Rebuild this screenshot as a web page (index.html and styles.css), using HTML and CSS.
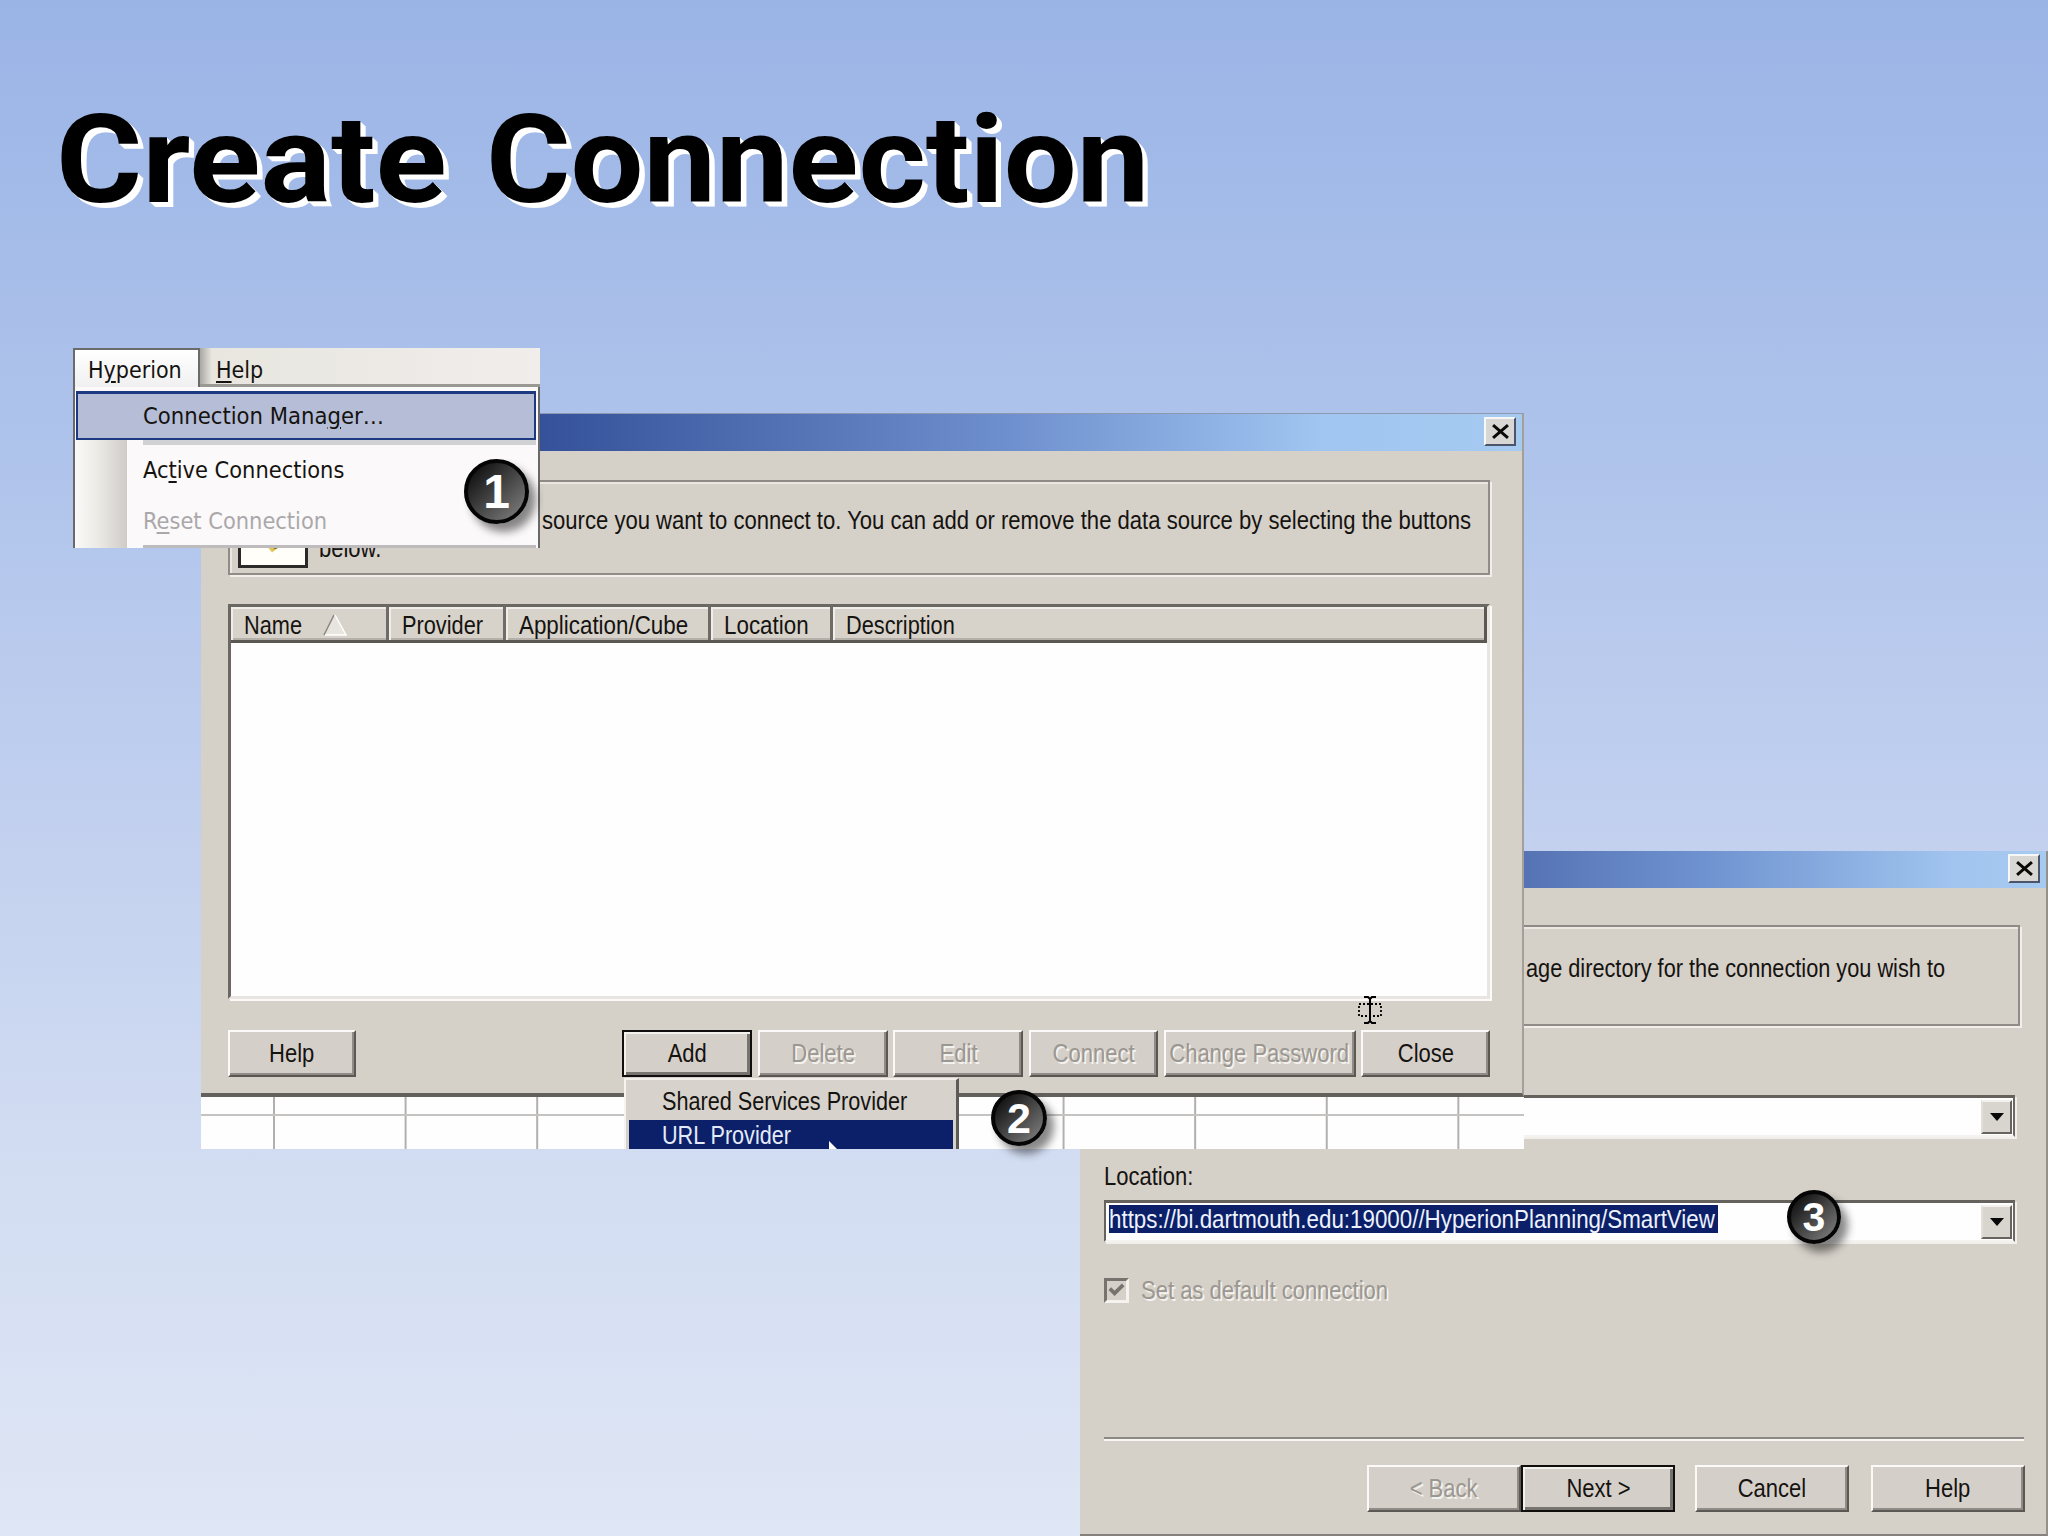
FILE: index.html
```html
<!DOCTYPE html>
<html lang="en">
<head>
<meta charset="utf-8">
<title>Create Connection</title>
<link rel="stylesheet" href="styles.css">
</head>
<body>
<main class="slide">
  <h1 class="title"><span class="word-a">Create</span><span class="word-b">Connection</span></h1>

  <section class="wizard">
    <header class="titlebar wizard-titlebar">
      <button class="close" aria-label="Close"><svg viewBox="0 0 16 14"><path d="M1 1 L15 13 M15 1 L1 13"/></svg></button>
    </header>
    <div class="wizard-body">
      <div class="group wizard-group"><span class="t t-age">age directory for the connection you wish to</span></div>
      <div class="combo combo-first"><span class="drop"><i></i></span></div>
      <div class="label"><span class="t t-location">Location:</span></div>
      <div class="combo combo-url"><span class="selection"><span class="t t-url">https://bi.dartmouth.edu:19000//HyperionPlanning/SmartView</span></span><span class="drop"><i></i></span></div>
      <div class="check-row">
        <span class="checkbox"><svg viewBox="0 0 20 20"><path d="M3 8 L8 13 L17 4"/></svg></span>
        <span class="t disabled t-default">Set as default connection</span>
      </div>
      <div class="rule"></div>
      <footer class="wizard-buttons">
        <button class="btn"><span class="t disabled t-back">&lt; Back</span></button>
        <button class="btn primary"><span class="t t-next">Next &gt;</span></button>
        <button class="btn gap-a"><span class="t">Cancel</span></button>
        <button class="btn gap-b"><span class="t">Help</span></button>
      </footer>
    </div>
  </section>

  <section class="manager">
    <div class="dialog">
      <header class="titlebar">
        <button class="close" aria-label="Close"><svg viewBox="0 0 16 14"><path d="M1 1 L15 13 M15 1 L1 13"/></svg></button>
      </header>
      <div class="dialog-body">
        <div class="group intro">
          <span class="intro-icon"><svg viewBox="0 0 66 30"><path d="M24 7 L32 17 L45 7 Z" fill="#e3c65a"/><path d="M33 14 L42 7 L39 12 Z" fill="#554a20"/></svg></span>
          <p class="intro-text"><span class="t t-source">source you want to connect to. You can add or remove the data source by selecting the buttons</span><span class="t t-below">below.</span></p>
        </div>
        <div class="list">
          <div class="columns">
            <div class="col"><span class="t">Name</span><svg class="sort" viewBox="0 0 24 22"><path d="M11 1 L23 21 L1 21 Z" fill="#e8e5df"/><path d="M1 21 L11 1" stroke="#8b8882" stroke-width="1.6"/><path d="M12 1 L23 21 L2 21" fill="none" stroke="#fff" stroke-width="1.5"/></svg></div>
            <div class="col"><span class="t">Provider</span></div>
            <div class="col"><span class="t t-app">Application/Cube</span></div>
            <div class="col"><span class="t t-app">Location</span></div>
            <div class="col"><span class="t">Description</span></div>
          </div>
        </div>
        <footer class="manager-buttons">
          <button class="btn"><span class="t">Help</span></button>
          <span></span>
          <button class="btn primary"><span class="t">Add</span></button>
          <button class="btn"><span class="t disabled">Delete</span></button>
          <button class="btn"><span class="t disabled">Edit</span></button>
          <button class="btn"><span class="t disabled">Connect</span></button>
          <button class="btn"><span class="t disabled">Change Password</span></button>
          <button class="btn"><span class="t">Close</span></button>
        </footer>
      </div>
    </div>
    <div class="sheet"></div>
    <div class="popup">
      <div class="popup-item"><span class="t">Shared Services Provider</span></div>
      <div class="popup-item active"><span class="t">URL Provider</span></div>
      <svg class="arrow" viewBox="0 0 12 8"><path d="M2 0 L10 8 L2 8 Z" fill="#fff"/></svg>
    </div>
    <svg class="ibeam" viewBox="0 0 24 28"><path d="M6 1 H10 L12 3 L14 1 H18 M12 3 V25 M6 27 H10 L12 25 L14 27 H18" fill="none" stroke="#000" stroke-width="2"/><path d="M1 8 H23 V20 H1 Z" fill="none" stroke="#000" stroke-width="1.8" stroke-dasharray="2 2"/></svg>
    <span class="badge badge-two">2</span>
  </section>

  <section class="menu">
    <nav class="menubar">
      <span class="tab"><span class="m m-hyp">H<u>y</u>perion</span></span>
      <span class="tab-help"><span class="m m-help"><u>H</u>elp</span></span>
    </nav>
    <div class="menu-list">
      <div class="menu-item selected"><span class="m m-mgr">Connection Mana<u>g</u>er…</span></div>
      <div class="menu-rest">
        <div class="gutter"></div>
        <div class="menu-items">
          <div class="menu-item active-row"><span class="m m-act">Ac<u>t</u>ive Connections</span></div>
          <div class="menu-item reset-row"><span class="m m-reset">R<u>e</u>set Connection</span></div>
        </div>
      </div>
    </div>
    <span class="badge badge-one">1</span>
  </section>

  <span class="badge badge-three">3</span>
</main>
</body>
</html>
```
FILE: styles.css
```css
* { box-sizing: border-box; }
html, body { margin: 0; }
.slide {
  position: relative;
  width: 2048px;
  height: 1536px;
  overflow: hidden;
  background: linear-gradient(#9ab4e6 0%, #aec3eb 28%, #c3d1ef 55%, #d2ddf2 76%, #dfe6f5 100%);
  font-family: "Liberation Sans", Arial, sans-serif;
  font-size: 25px;
  color: #151310;
}
.title {
  display: flex;
  margin: 0;
  padding: 86px 0 0 56px;
  font: 700 122px/150px Roboto, "Open Sans", sans-serif;
  color: #000;
  text-shadow: 1px 1px #fff, 2px 2px #fff, 3px 3px #fff, 4px 4px #fff, 5px 5px #fff;
}
.word-a, .word-b { transform-origin: left; }
.word-a { width: 430px; transform: scaleX(1.08); }
.word-b { transform: scaleX(1.06); }

/* Condensed system lettering */
.t { display: inline-block; white-space: nowrap; transform: scaleX(.88); line-height: 30px; }
.disabled { color: #9b9791; text-shadow: 2px 2px #f4f2ee; }

/* Shared window parts */
button { padding: 0; font: inherit; color: inherit; }
.titlebar { display: flex; justify-content: flex-end; align-items: flex-start; height: 37px; padding: 3px 6px 0 0; }
.close {
  display: grid; place-items: center; width: 32px; height: 29px;
  background: #d9d7d3; border: 2px solid; border-color: #f7f7f7 #4b5468 #4b5468 #f7f7f7;
}
.close svg { width: 17px; height: 15px; stroke: #0c0a08; stroke-width: 2.8; }
.group { border: 2px solid #918d86; border-top-color: #8f8b84; box-shadow: 2px 2px #f1efec, inset 2px 2px #ebe8e3; }
.btn {
  display: grid; place-content: center; height: 47px; padding-bottom: 2px; background: #d5cfc9;
  border: 2px solid; border-color: #fbfaf8 #5b5752 #5b5752 #fbfaf8;
  box-shadow: inset -2px -2px #8f8b86;
}
.primary { border-color: #100f0e; box-shadow: inset 2px 2px #f3f1ee, inset -3px -3px #77736e; }

/* Connection manager */
.manager { position: absolute; left: 201px; top: 413px; width: 1323px; height: 736px; }
.dialog { height: 684px; background: #d5d0c8; border-right: 2px solid #a3a09b; border-bottom: 4px solid #64615d; border-top: 1px solid #8e98ae; }
.dialog .titlebar { background: linear-gradient(90deg, #0a246a, #35529a 26%, #7091cf 62%, #a0c6f1 85%, #a6caf0); }
.dialog-body { padding: 29px 32px 0 27px; }
.intro { display: flex; height: 95px; padding: 8px 0 0 8px; }
.intro-icon { flex: none; width: 70px; height: 78px; padding-top: 46px; background: #fffef8; border: 3px solid #2c2a28; border-top: 0; }
.intro-icon svg { display: block; }
.intro-text { display: flex; flex-direction: column; align-items: flex-start; margin: 16px 0 0 11px; }
.intro-text .t { line-height: 28px; transform-origin: left; }
.intro-text .t-source { margin-left: 223px; transform: scaleX(.883); }
.list { height: 395px; margin-top: 29px; background: #fefefe; border: 3px solid; border-color: #6b6863 #e9e6e1 #e9e6e1 #6b6863; box-shadow: 2px 2px #fbfaf9; }
.columns { display: grid; grid-template-columns: 158px 117px 205px 122px 1fr; height: 36px; border-right: 3px solid #5b5854; border-bottom: 3px solid #5b5854; }
.col { display: flex; align-items: center; padding: 2px 0 0 13px; border-right: 3px solid #6f6c67; background: #d7d2ca; box-shadow: inset 2px 2px #f0eeea, inset 0 -2px #b5b0a9; }
.col:last-child { border-right: 0; }
.col .t { transform-origin: left; transform: scaleX(.87); }
.col .t-app { transform: scaleX(.895); }
.sort { width: 24px; height: 22px; margin-left: 12px; }
.manager-buttons { display: grid; grid-template-columns: 128px 255px 130px 130px 130px 129px 192px 129px; column-gap: 5.6px; width: 1264px; margin-top: 31px; }
.sheet {
  height: 52px;
  background:
    linear-gradient(#c5c3c2, #c5c3c2) 0 17px / 100% 2px no-repeat,
    linear-gradient(90deg, #b2b0af 2px, transparent 2px) 72px 0 / 131.6px 100%,
    #fefefe;
}
.popup { position: absolute; left: 423px; top: 665px; width: 335px; height: 71px; padding: 6px 3px 0; background: #d8d2cc; border-left: 2px solid #f5f3f0; border-top: 2px solid #f2efeb; border-right: 3px solid #5d5a57; overflow: hidden; }
.popup-item { height: 34px; padding: 0 0 0 33px; }
.popup-item .t { transform-origin: left; transform: scaleX(.865); }
.active { height: 32px; color: #e4eaf8; background: #0b2069; }
.arrow { position: absolute; left: 201px; top: 61px; width: 12px; height: 8px; }
.ibeam { position: absolute; left: 1157px; top: 583px; width: 24px; height: 28px; }

/* Provider wizard */
.wizard { position: absolute; left: 1080px; top: 851px; width: 968px; height: 685px; background: #d5d0c8; border-right: 2px solid #94918c; border-bottom: 2px solid #85817c; }
.wizard-titlebar { padding-right: 6px; background: linear-gradient(90deg, #0a246a, #5673b4 46%, #6f93d0 65%, #a0c4ee 90%, #a6caf0); }
.wizard-body { padding: 37px 21px 0 24px; }
.wizard-group { width: 916px; height: 101px; padding: 26px 0 0 420px; }
.t-age { transform-origin: left; transform: scaleX(.869); }
.combo { display: flex; justify-content: space-between; width: 911px; height: 42px; padding: 2px 1px; background: #fefefe; border: 2px solid; border-color: #65625d #6c6964 #f5f3f0 #65625d; border-top-width: 3px; box-shadow: 2px 2px #f1efec; }
.combo-first { margin-top: 69px; }
.drop { display: grid; place-items: center; width: 31px; height: 34px; margin-left: auto; background: #d8d5cf; border: 2px solid; border-color: #f3f1ed #67645f #67645f #e2dfda; }
.drop i { border: 7px solid transparent; border-top: 8px solid #080808; border-bottom: 0; }
.label { height: 63px; padding-top: 24px; }
.label .t, .check-row .t { transform-origin: left; }
.selection { width: 609px; height: 28px; margin: 0 0 0 2px; background: #0b2069; color: #edf2fb; overflow: hidden; }
.selection .t { line-height: 28px; transform-origin: left; transform: scaleX(.894); }
.check-row { display: flex; align-items: center; gap: 12px; height: 30px; margin-top: 33px; }
.checkbox { width: 25px; height: 25px; border: 3px solid; border-color: #77736e #f5f3f0 #f5f3f0 #77736e; }
.checkbox svg { display: block; width: 19px; height: 19px; fill: none; stroke: #77736e; stroke-width: 4; }
.rule { width: 920px; height: 4px; margin-top: 132px; background: linear-gradient(#8c8883 50%, #f8f6f3 50%); }
.wizard-buttons { display: flex; justify-content: flex-end; margin-top: 24px; }
.wizard-buttons .btn { width: 154px; }
.wizard-buttons .gap-a { margin-left: 20px; }
.wizard-buttons .gap-b { margin-left: 22px; }

/* Application menu */
.menu { position: absolute; left: 73px; top: 348px; width: 467px; height: 200px; font-family: "DejaVu Sans Condensed", "DejaVu Sans", sans-serif; font-stretch: condensed; font-size: 23px; }
.m { display: inline-block; white-space: nowrap; transform-origin: left; line-height: 30px; }
.m u { text-decoration-thickness: 2px; text-underline-offset: 3px; }
.m-mgr { transform: scaleX(1.025); }
.m-act, .m-reset { transform: scaleX(1.015); }
.menubar { display: flex; height: 39px; background: linear-gradient(90deg, #e5e3da, #f0edeb); }
.tab { width: 127px; padding: 5px 0 0 13px; background: linear-gradient(#fff, #f1f0f0); border: 2px solid #6b6b6b; border-bottom: 0; }
.tab-help { flex: 1; padding: 7px 0 0 16px; background: linear-gradient(90deg, #aaa8a5, transparent 12px); border-bottom: 3px solid #9a9893; }
.menu-list { height: 161px; padding: 4px 2px 0 1px; background: #fcf9fa; border-left: 2px solid #69696c; border-right: 2px solid #69696c; }
.menu-item.selected { height: 49px; padding: 7px 0 0 65px; background: #b5bdd7; border: 2px solid #1c3982; border-top-width: 3px; }
.menu-rest { display: flex; height: 108px; }
.gutter { width: 51px; background: linear-gradient(90deg, #faf9f8, #e9e7e2 50%, #cfcbc6); }
.menu-items { flex: 1; margin-left: 16px; border-top: 5px solid #cfd1d2; border-bottom: 3px solid #bdbbbb; }
.active-row { padding-top: 10px; }
.reset-row { padding-top: 21px; color: #aaa8aa; }

/* Step markers */
.badge {
  position: absolute; display: grid; place-items: center; border: 4px solid #050505; border-radius: 50%;
  background: linear-gradient(135deg, #171717 15%, #777 90%); box-shadow: 7px 8px 9px #0007;
  color: #fff; font-family: "Liberation Sans", Arial, sans-serif; font-weight: 700;
}
.badge-one { left: 391px; top: 111px; width: 65px; height: 65px; font-size: 48px; }
.badge-two { left: 790px; top: 677px; width: 56px; height: 56px; font-size: 43px; }
.badge-three { left: 1787px; top: 1190px; width: 54px; height: 54px; font-size: 41px; }
```
